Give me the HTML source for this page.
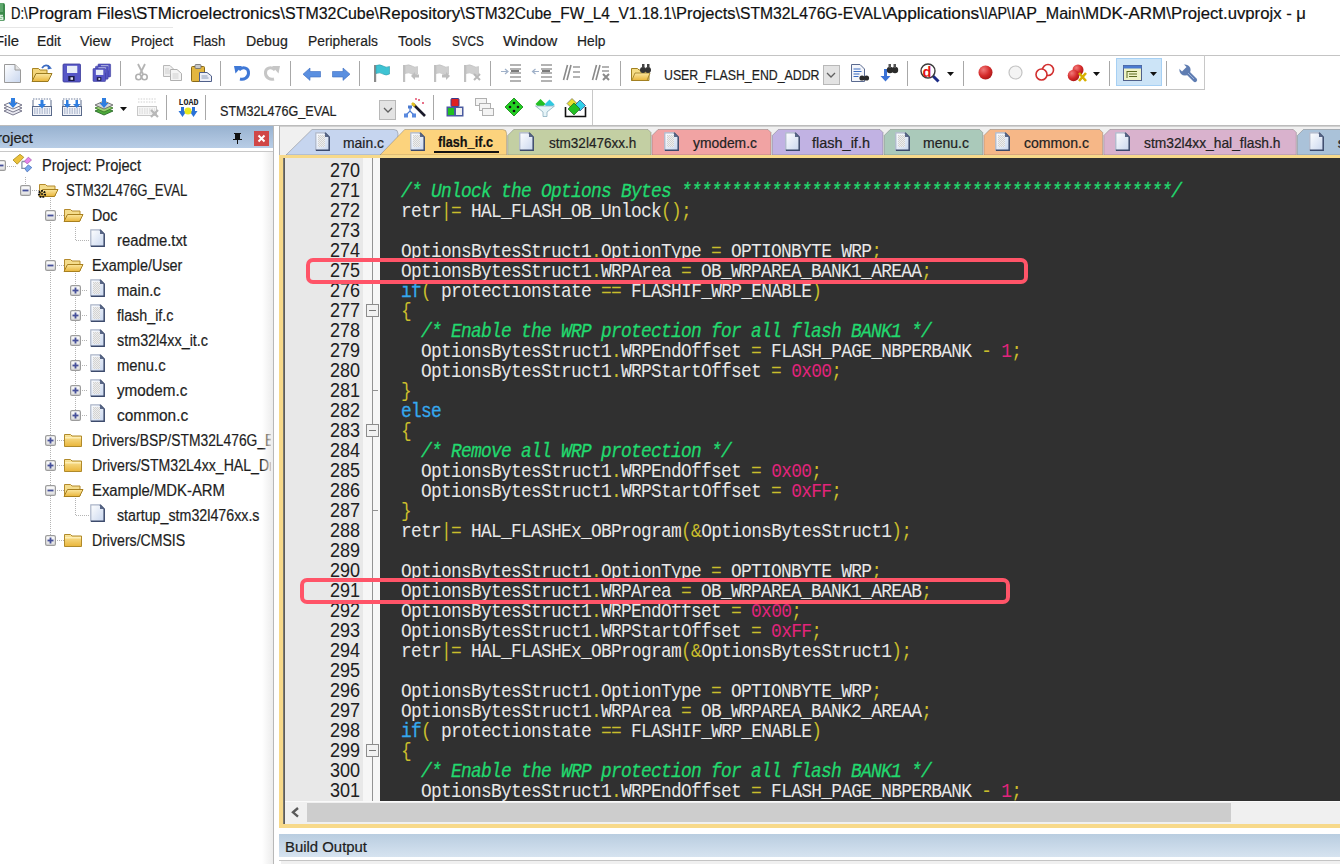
<!DOCTYPE html>
<html><head><meta charset="utf-8"><title>uVision</title><style>
*{margin:0;padding:0;box-sizing:border-box}
html,body{width:1340px;height:864px;overflow:hidden}
body{position:relative;background:#fff;font-family:"Liberation Sans",sans-serif;color:#1e1e1e}
.a{position:absolute}
.t{position:absolute;white-space:pre;line-height:1;-webkit-text-stroke:0.2px currentColor}
svg{position:absolute;overflow:visible}
/* code */
.code{position:absolute;left:380px;top:158px;width:960px;height:643px;background:#303030;overflow:hidden}
.ln{position:absolute;left:1px;width:1200px;height:20px;white-space:pre;font-family:"Liberation Mono",monospace;font-size:21px;line-height:20px;letter-spacing:-0.835px;color:#e8e8e8;transform:scaleX(0.85);transform-origin:0 0}
.p{color:#c9bd2c}
.n{color:#e2247c}
.k{color:#35a8ee;-webkit-text-stroke:0.3px currentColor}
.c{color:#22d96e;font-style:italic;-webkit-text-stroke:0.3px currentColor}
.gut{position:absolute;left:285px;top:158px;width:78px;height:643px;background:#e8e8e8;overflow:hidden}
.fm{position:absolute;left:363px;top:158px;width:17px;height:643px;background:#f6f6f6}
.num{position:absolute;left:15px;width:60px;text-align:right;font-size:20px;line-height:20px;height:20px;color:#202020;-webkit-text-stroke:0;transform:scaleX(0.9);transform-origin:100% 0}

</style></head><body>
<svg width="0" height="0" style="position:absolute;left:0;top:0"><defs><linearGradient id="pmg" x1="0" y1="0" x2="0" y2="1"><stop offset="0" stop-color="#ffffff"/><stop offset="1" stop-color="#dcdcdc"/></linearGradient><linearGradient id="pgg" x1="0" y1="0" x2="1" y2="1"><stop offset="0" stop-color="#ffffff"/><stop offset="1" stop-color="#c8d6ee"/></linearGradient><linearGradient id="fdg" x1="0" y1="0" x2="0" y2="1"><stop offset="0" stop-color="#fbe7a0"/><stop offset="1" stop-color="#e9b53a"/></linearGradient><pattern id="chk" width="2" height="2" patternUnits="userSpaceOnUse"><rect width="1" height="1" fill="#d2d2d2"/><rect x="1" y="1" width="1" height="1" fill="#d2d2d2"/><rect x="1" width="1" height="1" fill="#eeeeee"/><rect y="1" width="1" height="1" fill="#eeeeee"/></pattern></defs></svg><div class="a" style="left:25px;top:177px;width:1px;height:8px;background:repeating-linear-gradient(180deg,#b4b4b4 0 1px,transparent 1px 2px)"></div><div class="a" style="left:50px;top:198px;width:1px;height:337px;background:repeating-linear-gradient(180deg,#b4b4b4 0 1px,transparent 1px 2px)"></div><div class="a" style="left:75px;top:227px;width:1px;height:13px;background:repeating-linear-gradient(180deg,#b4b4b4 0 1px,transparent 1px 2px)"></div><div class="a" style="left:75px;top:271px;width:1px;height:139px;background:repeating-linear-gradient(180deg,#b4b4b4 0 1px,transparent 1px 2px)"></div><div class="a" style="left:75px;top:496px;width:1px;height:19px;background:repeating-linear-gradient(180deg,#b4b4b4 0 1px,transparent 1px 2px)"></div><div class="a" style="left:0;top:0;width:271px;height:864px;overflow:hidden"><svg style="left:-5.0px;top:159.5px" width="11" height="11" viewBox="0 0 11 11"><rect x="0.6" y="0.6" width="9.8" height="9.8" rx="1.5" fill="url(#pmg)" stroke="#9c9c9c" stroke-width="1.2"/><rect x="2.5" y="4.6" width="6" height="1.8" fill="#46509a"/></svg><div class="a" style="left:6.5px;top:166px;width:9.5px;height:1px;background:repeating-linear-gradient(90deg,#b4b4b4 0 1px,transparent 1px 2px)"></div><svg style="left:0px;top:150px" width="40" height="30" viewBox="0 0 40 30"><path d="M21.9 11.5 V18.4 H26 M21.9 11.5 H25.5" fill="none" stroke="#8892a4" stroke-width="1.3"/><path d="M13 10 L20 4.3 L23.8 7.3 L17.2 14.2Z" fill="#ecc23c" stroke="#a88a1c" stroke-width=".8"/><path d="M24.5 11.2 L28.3 7.2 L31.5 10 L27.2 13.9Z" fill="#e884ec" stroke="#a860b0" stroke-width=".8"/><path d="M24.8 18.7 L28.3 14.9 L31.8 17.6 L27.2 21.9Z" fill="#78a8ee" stroke="#4a70b8" stroke-width=".8"/></svg><div class="t" style="left:41.80px;top:158.02px;font-size:15.80px;color:#1e1e1e;transform:scaleX(0.9241);transform-origin:0 0;">Project: Project</div><svg style="left:20.0px;top:184.5px" width="11" height="11" viewBox="0 0 11 11"><rect x="0.6" y="0.6" width="9.8" height="9.8" rx="1.5" fill="url(#pmg)" stroke="#9c9c9c" stroke-width="1.2"/><rect x="2.5" y="4.6" width="6" height="1.8" fill="#46509a"/></svg><div class="a" style="left:31.5px;top:190px;width:7.0px;height:1px;background:repeating-linear-gradient(90deg,#b4b4b4 0 1px,transparent 1px 2px)"></div><svg style="left:38px;top:182px" width="21" height="16" viewBox="0 0 21 16"><path d="M1.5 2.5h6l1.5 1.5h8v10h-15.5z" fill="#f4dc8c" stroke="#b48a2c"/><path d="M1 14.5 L4.5 7.5 H20 L16.5 14.5 Z" fill="url(#fdg)" stroke="#a8801e"/></svg><svg style="left:37px;top:189px" width="10" height="10" viewBox="0 0 10 10"><circle cx="5" cy="5" r="3" fill="none" stroke="#111" stroke-width="2.2" stroke-dasharray="1.6 1"/><circle cx="5" cy="5" r="1" fill="#111"/></svg><div class="t" style="left:66.40px;top:183.02px;font-size:15.80px;color:#1e1e1e;transform:scaleX(0.8293);transform-origin:0 0;">STM32L476G_EVAL</div><svg style="left:45.0px;top:209.5px" width="11" height="11" viewBox="0 0 11 11"><rect x="0.6" y="0.6" width="9.8" height="9.8" rx="1.5" fill="url(#pmg)" stroke="#9c9c9c" stroke-width="1.2"/><rect x="2.5" y="4.6" width="6" height="1.8" fill="#46509a"/></svg><div class="a" style="left:56.5px;top:215px;width:7.0px;height:1px;background:repeating-linear-gradient(90deg,#b4b4b4 0 1px,transparent 1px 2px)"></div><svg style="left:63px;top:207px" width="21" height="16" viewBox="0 0 21 16"><path d="M1.5 2.5h6l1.5 1.5h8v10h-15.5z" fill="#f4dc8c" stroke="#b48a2c"/><path d="M1 14.5 L4.5 7.5 H20 L16.5 14.5 Z" fill="url(#fdg)" stroke="#a8801e"/></svg><div class="t" style="left:91.50px;top:208.02px;font-size:15.80px;color:#1e1e1e;transform:scaleX(0.9040);transform-origin:0 0;">Doc</div><div class="a" style="left:76px;top:240px;width:14px;height:1px;background:repeating-linear-gradient(90deg,#b4b4b4 0 1px,transparent 1px 2px)"></div><svg style="left:90.3px;top:229.4px" width="15" height="18" viewBox="0 0 15 18"><path d="M0.5 17.5 V0.5 H10 L14.5 5 V17.5 Z" fill="url(#pgg)" stroke="none"/><path d="M0.8 17 V0.8 H10" fill="none" stroke="#aab4c8" stroke-width="1.2"/><path d="M10 0.8 L14.2 5 V17.2 H0.8" fill="none" stroke="#3c4a6c" stroke-width="1.5"/><path d="M10 0.8 V5 H14.2 Z" fill="#5a6888"/></svg><div class="t" style="left:117.20px;top:233.02px;font-size:15.80px;color:#1e1e1e;transform:scaleX(0.9378);transform-origin:0 0;">readme.txt</div><svg style="left:45.0px;top:259.5px" width="11" height="11" viewBox="0 0 11 11"><rect x="0.6" y="0.6" width="9.8" height="9.8" rx="1.5" fill="url(#pmg)" stroke="#9c9c9c" stroke-width="1.2"/><rect x="2.5" y="4.6" width="6" height="1.8" fill="#46509a"/></svg><div class="a" style="left:56.5px;top:265px;width:7.0px;height:1px;background:repeating-linear-gradient(90deg,#b4b4b4 0 1px,transparent 1px 2px)"></div><svg style="left:63px;top:257px" width="21" height="16" viewBox="0 0 21 16"><path d="M1.5 2.5h6l1.5 1.5h8v10h-15.5z" fill="#f4dc8c" stroke="#b48a2c"/><path d="M1 14.5 L4.5 7.5 H20 L16.5 14.5 Z" fill="url(#fdg)" stroke="#a8801e"/></svg><div class="t" style="left:91.50px;top:258.02px;font-size:15.80px;color:#1e1e1e;transform:scaleX(0.9111);transform-origin:0 0;">Example/User</div><svg style="left:70.0px;top:284.5px" width="11" height="11" viewBox="0 0 11 11"><rect x="0.6" y="0.6" width="9.8" height="9.8" rx="1.5" fill="url(#pmg)" stroke="#9c9c9c" stroke-width="1.2"/><rect x="2.5" y="4.6" width="6" height="1.8" fill="#46509a"/><rect x="4.6" y="2.5" width="1.8" height="6" fill="#46509a"/></svg><div class="a" style="left:81.5px;top:290px;width:6.0px;height:1px;background:repeating-linear-gradient(90deg,#b4b4b4 0 1px,transparent 1px 2px)"></div><svg style="left:90.3px;top:279.4px" width="15" height="18" viewBox="0 0 15 18"><path d="M0.5 17.5 V0.5 H10 L14.5 5 V17.5 Z" fill="url(#pgg)" stroke="none"/><path d="M0.8 17 V0.8 H10" fill="none" stroke="#aab4c8" stroke-width="1.2"/><path d="M10 0.8 L14.2 5 V17.2 H0.8" fill="none" stroke="#3c4a6c" stroke-width="1.5"/><path d="M10 0.8 V5 H14.2 Z" fill="#5a6888"/><rect x="3" y="3" width="7" height="12" fill="url(#chk)"/></svg><div class="t" style="left:117.20px;top:283.02px;font-size:15.80px;color:#1e1e1e;transform:scaleX(0.9391);transform-origin:0 0;">main.c</div><svg style="left:70.0px;top:309.5px" width="11" height="11" viewBox="0 0 11 11"><rect x="0.6" y="0.6" width="9.8" height="9.8" rx="1.5" fill="url(#pmg)" stroke="#9c9c9c" stroke-width="1.2"/><rect x="2.5" y="4.6" width="6" height="1.8" fill="#46509a"/><rect x="4.6" y="2.5" width="1.8" height="6" fill="#46509a"/></svg><div class="a" style="left:81.5px;top:315px;width:6.0px;height:1px;background:repeating-linear-gradient(90deg,#b4b4b4 0 1px,transparent 1px 2px)"></div><svg style="left:90.3px;top:304.4px" width="15" height="18" viewBox="0 0 15 18"><path d="M0.5 17.5 V0.5 H10 L14.5 5 V17.5 Z" fill="url(#pgg)" stroke="none"/><path d="M0.8 17 V0.8 H10" fill="none" stroke="#aab4c8" stroke-width="1.2"/><path d="M10 0.8 L14.2 5 V17.2 H0.8" fill="none" stroke="#3c4a6c" stroke-width="1.5"/><path d="M10 0.8 V5 H14.2 Z" fill="#5a6888"/><rect x="3" y="3" width="7" height="12" fill="url(#chk)"/></svg><div class="t" style="left:117.20px;top:308.02px;font-size:15.80px;color:#1e1e1e;transform:scaleX(0.9046);transform-origin:0 0;">flash_if.c</div><svg style="left:70.0px;top:334.5px" width="11" height="11" viewBox="0 0 11 11"><rect x="0.6" y="0.6" width="9.8" height="9.8" rx="1.5" fill="url(#pmg)" stroke="#9c9c9c" stroke-width="1.2"/><rect x="2.5" y="4.6" width="6" height="1.8" fill="#46509a"/><rect x="4.6" y="2.5" width="1.8" height="6" fill="#46509a"/></svg><div class="a" style="left:81.5px;top:340px;width:6.0px;height:1px;background:repeating-linear-gradient(90deg,#b4b4b4 0 1px,transparent 1px 2px)"></div><svg style="left:90.3px;top:329.4px" width="15" height="18" viewBox="0 0 15 18"><path d="M0.5 17.5 V0.5 H10 L14.5 5 V17.5 Z" fill="url(#pgg)" stroke="none"/><path d="M0.8 17 V0.8 H10" fill="none" stroke="#aab4c8" stroke-width="1.2"/><path d="M10 0.8 L14.2 5 V17.2 H0.8" fill="none" stroke="#3c4a6c" stroke-width="1.5"/><path d="M10 0.8 V5 H14.2 Z" fill="#5a6888"/><rect x="3" y="3" width="7" height="12" fill="url(#chk)"/></svg><div class="t" style="left:117.20px;top:333.02px;font-size:15.80px;color:#1e1e1e;transform:scaleX(0.9091);transform-origin:0 0;">stm32l4xx_it.c</div><svg style="left:70.0px;top:359.5px" width="11" height="11" viewBox="0 0 11 11"><rect x="0.6" y="0.6" width="9.8" height="9.8" rx="1.5" fill="url(#pmg)" stroke="#9c9c9c" stroke-width="1.2"/><rect x="2.5" y="4.6" width="6" height="1.8" fill="#46509a"/><rect x="4.6" y="2.5" width="1.8" height="6" fill="#46509a"/></svg><div class="a" style="left:81.5px;top:365px;width:6.0px;height:1px;background:repeating-linear-gradient(90deg,#b4b4b4 0 1px,transparent 1px 2px)"></div><svg style="left:90.3px;top:354.4px" width="15" height="18" viewBox="0 0 15 18"><path d="M0.5 17.5 V0.5 H10 L14.5 5 V17.5 Z" fill="url(#pgg)" stroke="none"/><path d="M0.8 17 V0.8 H10" fill="none" stroke="#aab4c8" stroke-width="1.2"/><path d="M10 0.8 L14.2 5 V17.2 H0.8" fill="none" stroke="#3c4a6c" stroke-width="1.5"/><path d="M10 0.8 V5 H14.2 Z" fill="#5a6888"/><rect x="3" y="3" width="7" height="12" fill="url(#chk)"/></svg><div class="t" style="left:117.20px;top:358.02px;font-size:15.80px;color:#1e1e1e;transform:scaleX(0.9380);transform-origin:0 0;">menu.c</div><svg style="left:70.0px;top:384.5px" width="11" height="11" viewBox="0 0 11 11"><rect x="0.6" y="0.6" width="9.8" height="9.8" rx="1.5" fill="url(#pmg)" stroke="#9c9c9c" stroke-width="1.2"/><rect x="2.5" y="4.6" width="6" height="1.8" fill="#46509a"/><rect x="4.6" y="2.5" width="1.8" height="6" fill="#46509a"/></svg><div class="a" style="left:81.5px;top:390px;width:6.0px;height:1px;background:repeating-linear-gradient(90deg,#b4b4b4 0 1px,transparent 1px 2px)"></div><svg style="left:90.3px;top:379.4px" width="15" height="18" viewBox="0 0 15 18"><path d="M0.5 17.5 V0.5 H10 L14.5 5 V17.5 Z" fill="url(#pgg)" stroke="none"/><path d="M0.8 17 V0.8 H10" fill="none" stroke="#aab4c8" stroke-width="1.2"/><path d="M10 0.8 L14.2 5 V17.2 H0.8" fill="none" stroke="#3c4a6c" stroke-width="1.5"/><path d="M10 0.8 V5 H14.2 Z" fill="#5a6888"/><rect x="3" y="3" width="7" height="12" fill="url(#chk)"/></svg><div class="t" style="left:117.20px;top:383.02px;font-size:15.80px;color:#1e1e1e;transform:scaleX(0.9647);transform-origin:0 0;">ymodem.c</div><svg style="left:70.0px;top:409.5px" width="11" height="11" viewBox="0 0 11 11"><rect x="0.6" y="0.6" width="9.8" height="9.8" rx="1.5" fill="url(#pmg)" stroke="#9c9c9c" stroke-width="1.2"/><rect x="2.5" y="4.6" width="6" height="1.8" fill="#46509a"/><rect x="4.6" y="2.5" width="1.8" height="6" fill="#46509a"/></svg><div class="a" style="left:81.5px;top:415px;width:6.0px;height:1px;background:repeating-linear-gradient(90deg,#b4b4b4 0 1px,transparent 1px 2px)"></div><svg style="left:90.3px;top:404.4px" width="15" height="18" viewBox="0 0 15 18"><path d="M0.5 17.5 V0.5 H10 L14.5 5 V17.5 Z" fill="url(#pgg)" stroke="none"/><path d="M0.8 17 V0.8 H10" fill="none" stroke="#aab4c8" stroke-width="1.2"/><path d="M10 0.8 L14.2 5 V17.2 H0.8" fill="none" stroke="#3c4a6c" stroke-width="1.5"/><path d="M10 0.8 V5 H14.2 Z" fill="#5a6888"/><rect x="3" y="3" width="7" height="12" fill="url(#chk)"/></svg><div class="t" style="left:117.20px;top:408.02px;font-size:15.80px;color:#1e1e1e;transform:scaleX(0.9770);transform-origin:0 0;">common.c</div><svg style="left:45.0px;top:434.5px" width="11" height="11" viewBox="0 0 11 11"><rect x="0.6" y="0.6" width="9.8" height="9.8" rx="1.5" fill="url(#pmg)" stroke="#9c9c9c" stroke-width="1.2"/><rect x="2.5" y="4.6" width="6" height="1.8" fill="#46509a"/><rect x="4.6" y="2.5" width="1.8" height="6" fill="#46509a"/></svg><div class="a" style="left:56.5px;top:440px;width:7.0px;height:1px;background:repeating-linear-gradient(90deg,#b4b4b4 0 1px,transparent 1px 2px)"></div><svg style="left:63px;top:432px" width="21" height="16" viewBox="0 0 21 16"><path d="M1.5 2.5h6l1.5 1.5h9.5v10.5h-17z" fill="url(#fdg)" stroke="#b08a2a"/><rect x="2" y="5" width="16" height="1.5" fill="#fff3c0" opacity=".8"/></svg><div class="t" style="left:91.50px;top:433.02px;font-size:15.80px;color:#1e1e1e;transform:scaleX(0.8762);transform-origin:0 0;">Drivers/BSP/STM32L476G_EVAL</div><svg style="left:45.0px;top:459.5px" width="11" height="11" viewBox="0 0 11 11"><rect x="0.6" y="0.6" width="9.8" height="9.8" rx="1.5" fill="url(#pmg)" stroke="#9c9c9c" stroke-width="1.2"/><rect x="2.5" y="4.6" width="6" height="1.8" fill="#46509a"/><rect x="4.6" y="2.5" width="1.8" height="6" fill="#46509a"/></svg><div class="a" style="left:56.5px;top:465px;width:7.0px;height:1px;background:repeating-linear-gradient(90deg,#b4b4b4 0 1px,transparent 1px 2px)"></div><svg style="left:63px;top:457px" width="21" height="16" viewBox="0 0 21 16"><path d="M1.5 2.5h6l1.5 1.5h9.5v10.5h-17z" fill="url(#fdg)" stroke="#b08a2a"/><rect x="2" y="5" width="16" height="1.5" fill="#fff3c0" opacity=".8"/></svg><div class="t" style="left:91.50px;top:458.02px;font-size:15.80px;color:#1e1e1e;transform:scaleX(0.8926);transform-origin:0 0;">Drivers/STM32L4xx_HAL_Driver</div><svg style="left:45.0px;top:484.5px" width="11" height="11" viewBox="0 0 11 11"><rect x="0.6" y="0.6" width="9.8" height="9.8" rx="1.5" fill="url(#pmg)" stroke="#9c9c9c" stroke-width="1.2"/><rect x="2.5" y="4.6" width="6" height="1.8" fill="#46509a"/></svg><div class="a" style="left:56.5px;top:490px;width:7.0px;height:1px;background:repeating-linear-gradient(90deg,#b4b4b4 0 1px,transparent 1px 2px)"></div><svg style="left:63px;top:482px" width="21" height="16" viewBox="0 0 21 16"><path d="M1.5 2.5h6l1.5 1.5h8v10h-15.5z" fill="#f4dc8c" stroke="#b48a2c"/><path d="M1 14.5 L4.5 7.5 H20 L16.5 14.5 Z" fill="url(#fdg)" stroke="#a8801e"/></svg><div class="t" style="left:91.50px;top:483.02px;font-size:15.80px;color:#1e1e1e;transform:scaleX(0.9410);transform-origin:0 0;">Example/MDK-ARM</div><div class="a" style="left:76px;top:515px;width:14px;height:1px;background:repeating-linear-gradient(90deg,#b4b4b4 0 1px,transparent 1px 2px)"></div><svg style="left:90.3px;top:504.4px" width="15" height="18" viewBox="0 0 15 18"><path d="M0.5 17.5 V0.5 H10 L14.5 5 V17.5 Z" fill="url(#pgg)" stroke="none"/><path d="M0.8 17 V0.8 H10" fill="none" stroke="#aab4c8" stroke-width="1.2"/><path d="M10 0.8 L14.2 5 V17.2 H0.8" fill="none" stroke="#3c4a6c" stroke-width="1.5"/><path d="M10 0.8 V5 H14.2 Z" fill="#5a6888"/></svg><div class="t" style="left:117.20px;top:508.02px;font-size:15.80px;color:#1e1e1e;transform:scaleX(0.9015);transform-origin:0 0;">startup_stm32l476xx.s</div><svg style="left:45.0px;top:534.5px" width="11" height="11" viewBox="0 0 11 11"><rect x="0.6" y="0.6" width="9.8" height="9.8" rx="1.5" fill="url(#pmg)" stroke="#9c9c9c" stroke-width="1.2"/><rect x="2.5" y="4.6" width="6" height="1.8" fill="#46509a"/><rect x="4.6" y="2.5" width="1.8" height="6" fill="#46509a"/></svg><div class="a" style="left:56.5px;top:540px;width:7.0px;height:1px;background:repeating-linear-gradient(90deg,#b4b4b4 0 1px,transparent 1px 2px)"></div><svg style="left:63px;top:532px" width="21" height="16" viewBox="0 0 21 16"><path d="M1.5 2.5h6l1.5 1.5h9.5v10.5h-17z" fill="url(#fdg)" stroke="#b08a2a"/><rect x="2" y="5" width="16" height="1.5" fill="#fff3c0" opacity=".8"/></svg><div class="t" style="left:91.50px;top:533.02px;font-size:15.80px;color:#1e1e1e;transform:scaleX(0.8922);transform-origin:0 0;">Drivers/CMSIS</div></div><div class="gut"><div class="num t" style="top:2px">270</div><div class="num t" style="top:22px">271</div><div class="num t" style="top:42px">272</div><div class="num t" style="top:62px">273</div><div class="num t" style="top:82px">274</div><div class="num t" style="top:102px">275</div><div class="num t" style="top:122px">276</div><div class="num t" style="top:142px">277</div><div class="num t" style="top:162px">278</div><div class="num t" style="top:182px">279</div><div class="num t" style="top:202px">280</div><div class="num t" style="top:222px">281</div><div class="num t" style="top:242px">282</div><div class="num t" style="top:262px">283</div><div class="num t" style="top:282px">284</div><div class="num t" style="top:302px">285</div><div class="num t" style="top:322px">286</div><div class="num t" style="top:342px">287</div><div class="num t" style="top:362px">288</div><div class="num t" style="top:382px">289</div><div class="num t" style="top:402px">290</div><div class="num t" style="top:422px">291</div><div class="num t" style="top:442px">292</div><div class="num t" style="top:462px">293</div><div class="num t" style="top:482px">294</div><div class="num t" style="top:502px">295</div><div class="num t" style="top:522px">296</div><div class="num t" style="top:542px">297</div><div class="num t" style="top:562px">298</div><div class="num t" style="top:582px">299</div><div class="num t" style="top:602px">300</div><div class="num t" style="top:622px">301</div></div><div class="fm"></div><div class="code"><div class="ln" style="top:4px"></div><div class="ln" style="top:24px">  <span class="c">/* Unlock the Options Bytes *************************************************/</span></div><div class="ln" style="top:44px">  retr<span class="p">|</span><span class="p">=</span> HAL_FLASH_OB_Unlock<span class="p">(</span><span class="p">)</span><span class="p">;</span></div><div class="ln" style="top:64px"></div><div class="ln" style="top:84px">  OptionsBytesStruct1<span class="p">.</span>OptionType <span class="p">=</span> OPTIONBYTE_WRP<span class="p">;</span></div><div class="ln" style="top:104px">  OptionsBytesStruct1<span class="p">.</span>WRPArea <span class="p">=</span> OB_WRPAREA_BANK1_AREAA<span class="p">;</span></div><div class="ln" style="top:124px">  <span class="k">if</span><span class="p">(</span> protectionstate <span class="p">=</span><span class="p">=</span> FLASHIF_WRP_ENABLE<span class="p">)</span></div><div class="ln" style="top:144px">  <span class="p">{</span></div><div class="ln" style="top:164px">    <span class="c">/* Enable the WRP protection for all flash BANK1 */</span></div><div class="ln" style="top:184px">    OptionsBytesStruct1<span class="p">.</span>WRPEndOffset <span class="p">=</span> FLASH_PAGE_NBPERBANK <span class="p">-</span> <span class="n">1</span><span class="p">;</span></div><div class="ln" style="top:204px">    OptionsBytesStruct1<span class="p">.</span>WRPStartOffset <span class="p">=</span> <span class="n">0x00</span><span class="p">;</span></div><div class="ln" style="top:224px">  <span class="p">}</span></div><div class="ln" style="top:244px">  <span class="k">else</span></div><div class="ln" style="top:264px">  <span class="p">{</span></div><div class="ln" style="top:284px">    <span class="c">/* Remove all WRP protection */</span></div><div class="ln" style="top:304px">    OptionsBytesStruct1<span class="p">.</span>WRPEndOffset <span class="p">=</span> <span class="n">0x00</span><span class="p">;</span></div><div class="ln" style="top:324px">    OptionsBytesStruct1<span class="p">.</span>WRPStartOffset <span class="p">=</span> <span class="n">0xFF</span><span class="p">;</span></div><div class="ln" style="top:344px">  <span class="p">}</span></div><div class="ln" style="top:364px">  retr<span class="p">|</span><span class="p">=</span> HAL_FLASHEx_OBProgram<span class="p">(</span><span class="p">&amp;</span>OptionsBytesStruct1<span class="p">)</span><span class="p">;</span></div><div class="ln" style="top:384px"></div><div class="ln" style="top:404px">  OptionsBytesStruct1<span class="p">.</span>OptionType <span class="p">=</span> OPTIONBYTE_WRP<span class="p">;</span></div><div class="ln" style="top:424px">  OptionsBytesStruct1<span class="p">.</span>WRPArea <span class="p">=</span> OB_WRPAREA_BANK1_AREAB<span class="p">;</span></div><div class="ln" style="top:444px">  OptionsBytesStruct1<span class="p">.</span>WRPEndOffset <span class="p">=</span> <span class="n">0x00</span><span class="p">;</span></div><div class="ln" style="top:464px">  OptionsBytesStruct1<span class="p">.</span>WRPStartOffset <span class="p">=</span> <span class="n">0xFF</span><span class="p">;</span></div><div class="ln" style="top:484px">  retr<span class="p">|</span><span class="p">=</span> HAL_FLASHEx_OBProgram<span class="p">(</span><span class="p">&amp;</span>OptionsBytesStruct1<span class="p">)</span><span class="p">;</span></div><div class="ln" style="top:504px"></div><div class="ln" style="top:524px">  OptionsBytesStruct1<span class="p">.</span>OptionType <span class="p">=</span> OPTIONBYTE_WRP<span class="p">;</span></div><div class="ln" style="top:544px">  OptionsBytesStruct1<span class="p">.</span>WRPArea <span class="p">=</span> OB_WRPAREA_BANK2_AREAA<span class="p">;</span></div><div class="ln" style="top:564px">  <span class="k">if</span><span class="p">(</span> protectionstate <span class="p">=</span><span class="p">=</span> FLASHIF_WRP_ENABLE<span class="p">)</span></div><div class="ln" style="top:584px">  <span class="p">{</span></div><div class="ln" style="top:604px">    <span class="c">/* Enable the WRP protection for all flash BANK1 */</span></div><div class="ln" style="top:624px">    OptionsBytesStruct1<span class="p">.</span>WRPEndOffset <span class="p">=</span> FLASH_PAGE_NBPERBANK <span class="p">-</span> <span class="n">1</span><span class="p">;</span></div></div><svg style="left:0px;top:2.7px" width="5" height="18" viewBox="0 0 5 18"><rect x="-9" y="0" width="14" height="18" rx="2" fill="#3c8a4c"/><rect x="-9" y="0" width="12" height="9" fill="#7cc08a" opacity=".55"/><path d="M3 12.5 H0 V14.5 H2.6 V16.5 H-1" stroke="#d8f0dc" stroke-width="1.6" fill="none"/></svg><div class="t" style="left:10.80px;top:5.65px;font-size:16.00px;color:#111;transform:scaleX(0.8168);transform-origin:0 0;">D:\</div><div class="t" style="left:27.50px;top:5.65px;font-size:16.00px;color:#111;transform:scaleX(1.0430);transform-origin:0 0;">Program Files\</div><div class="t" style="left:136.00px;top:5.65px;font-size:16.00px;color:#111;transform:scaleX(1.0607);transform-origin:0 0;">STMicroelectronics\</div><div class="t" style="left:285.00px;top:5.65px;font-size:16.00px;color:#111;transform:scaleX(0.9972);transform-origin:0 0;">STM32Cube\</div><div class="t" style="left:379.00px;top:5.65px;font-size:16.00px;color:#111;transform:scaleX(1.0628);transform-origin:0 0;">Repository\</div><div class="t" style="left:465.00px;top:5.65px;font-size:16.00px;color:#111;transform:scaleX(0.9644);transform-origin:0 0;">STM32Cube_FW_L4_V1.18.1\</div><div class="t" style="left:676.00px;top:5.65px;font-size:16.00px;color:#111;transform:scaleX(1.0282);transform-origin:0 0;">Projects\</div><div class="t" style="left:740.00px;top:5.65px;font-size:16.00px;color:#111;transform:scaleX(0.9791);transform-origin:0 0;">STM32L476G-EVAL\</div><div class="t" style="left:886.00px;top:5.65px;font-size:16.00px;color:#111;transform:scaleX(1.0803);transform-origin:0 0;">Applications\</div><div class="t" style="left:984.00px;top:5.65px;font-size:16.00px;color:#111;transform:scaleX(0.8930);transform-origin:0 0;">IAP\</div><div class="t" style="left:1011.00px;top:5.65px;font-size:16.00px;color:#111;transform:scaleX(1.0025);transform-origin:0 0;">IAP_Main\</div><div class="t" style="left:1085.00px;top:5.65px;font-size:16.00px;color:#111;transform:scaleX(1.0633);transform-origin:0 0;">MDK-ARM\</div><div class="t" style="left:1171.00px;top:5.65px;font-size:16.00px;color:#111;transform:scaleX(1.0444);transform-origin:0 0;">Project.uvprojx - μ</div><div class="a" style="left:0px;top:27px;width:173px;height:1px;background:#e6e6e6"></div><div class="t" style="left:-5.50px;top:32.86px;font-size:15.40px;color:#1e1e1e;transform:scaleX(0.9672);transform-origin:0 0;">File</div><div class="t" style="left:37.00px;top:32.86px;font-size:15.40px;color:#1e1e1e;transform:scaleX(0.9006);transform-origin:0 0;">Edit</div><div class="t" style="left:80.00px;top:32.86px;font-size:15.40px;color:#1e1e1e;transform:scaleX(0.9365);transform-origin:0 0;">View</div><div class="t" style="left:130.90px;top:32.86px;font-size:15.40px;color:#1e1e1e;transform:scaleX(0.8805);transform-origin:0 0;">Project</div><div class="t" style="left:193.40px;top:32.86px;font-size:15.40px;color:#1e1e1e;transform:scaleX(0.8577);transform-origin:0 0;">Flash</div><div class="t" style="left:246.00px;top:32.86px;font-size:15.40px;color:#1e1e1e;transform:scaleX(0.9211);transform-origin:0 0;">Debug</div><div class="t" style="left:308.40px;top:32.86px;font-size:15.40px;color:#1e1e1e;transform:scaleX(0.8974);transform-origin:0 0;">Peripherals</div><div class="t" style="left:397.90px;top:32.86px;font-size:15.40px;color:#1e1e1e;transform:scaleX(0.9179);transform-origin:0 0;">Tools</div><div class="t" style="left:452.10px;top:32.86px;font-size:15.40px;color:#1e1e1e;transform:scaleX(0.7583);transform-origin:0 0;">SVCS</div><div class="t" style="left:503.00px;top:32.86px;font-size:15.40px;color:#1e1e1e;transform:scaleX(0.9932);transform-origin:0 0;">Window</div><div class="t" style="left:577.00px;top:32.86px;font-size:15.40px;color:#1e1e1e;transform:scaleX(0.8998);transform-origin:0 0;">Help</div><div class="a" style="left:0px;top:55px;width:1340px;height:1px;background:#c4c4c4"></div><div class="a" style="left:1204px;top:55px;width:1px;height:35px;background:#c8c8c8"></div><div class="a" style="left:0px;top:89px;width:1205px;height:1px;background:#c4c4c4"></div><div class="a" style="left:592px;top:90px;width:1px;height:34.5px;background:#c8c8c8"></div><div class="a" style="left:0px;top:124.5px;width:1340px;height:1px;background:#bcbcbc"></div><svg style="left:4px;top:63.5px" width="17" height="19" viewBox="0 0 17 19"><path d="M0.5 0.5H11L16.5 6V18.5H0.5Z" fill="url(#pgg)" stroke="#9a9a9a"/><path d="M11 0.5V6H16.5" fill="#e4e4e4" stroke="#9a9a9a"/></svg><svg style="left:31px;top:64px" width="22" height="18" viewBox="0 0 22 18"><path d="M1.5 4.5h6l1.5 1.5h7v11h-14.5z" fill="#f3d57a" stroke="#a88424"/><path d="M1 17.5 L5 9.5 H21 L17 17.5 Z" fill="url(#fdg)" stroke="#9a7a20"/><path d="M11 4 Q15 -1 19 3.5" fill="none" stroke="#3a6ac0" stroke-width="1.8"/><path d="M17 1 L21 4.5 L16.5 5.5Z" fill="#3a6ac0"/></svg><svg style="left:62.7px;top:63.8px" width="18" height="18" viewBox="0 0 18 18"><g transform="translate(0 0) scale(1)"><rect x="0" y="0" width="17.5" height="18" rx="1" fill="#5656c6" stroke="#3a3a9a" stroke-width=".8"/><rect x="4" y="1.8" width="10.3" height="7.2" fill="#e9eef8"/><rect x="5.3" y="12" width="6.3" height="5" fill="#1c1c4a"/><rect x="7.5" y="13.3" width="2.5" height="2.5" fill="#e0e0f0"/></g></svg><svg style="left:92.8px;top:63.8px" width="18" height="19" viewBox="0 0 18 19"><g transform="translate(5 0) scale(0.72)"><rect x="0" y="0" width="17.5" height="18" rx="1" fill="#5656c6" stroke="#3a3a9a" stroke-width=".8"/><rect x="4" y="1.8" width="10.3" height="7.2" fill="#e9eef8"/><rect x="5.3" y="12" width="6.3" height="5" fill="#1c1c4a"/><rect x="7.5" y="13.3" width="2.5" height="2.5" fill="#e0e0f0"/></g><g transform="translate(2.5 2.2) scale(0.72)"><rect x="0" y="0" width="17.5" height="18" rx="1" fill="#5656c6" stroke="#3a3a9a" stroke-width=".8"/><rect x="4" y="1.8" width="10.3" height="7.2" fill="#e9eef8"/><rect x="5.3" y="12" width="6.3" height="5" fill="#1c1c4a"/><rect x="7.5" y="13.3" width="2.5" height="2.5" fill="#e0e0f0"/></g><g transform="translate(0 4.5) scale(0.72)"><rect x="0" y="0" width="17.5" height="18" rx="1" fill="#5656c6" stroke="#3a3a9a" stroke-width=".8"/><rect x="4" y="1.8" width="10.3" height="7.2" fill="#e9eef8"/><rect x="5.3" y="12" width="6.3" height="5" fill="#1c1c4a"/><rect x="7.5" y="13.3" width="2.5" height="2.5" fill="#e0e0f0"/></g></svg><div class="a" style="left:119.5px;top:61px;width:1px;height:25px;background:#a8a8a8"></div><svg style="left:134.6px;top:64px" width="13" height="17" viewBox="0 0 13 17"><path d="M3 0 L8 10 M10 0 L5 10" stroke="#b4b4b4" stroke-width="1.8" fill="none"/><circle cx="3.5" cy="13" r="2.7" fill="none" stroke="#b0b0b0" stroke-width="1.6"/><circle cx="9.5" cy="13" r="2.7" fill="none" stroke="#b0b0b0" stroke-width="1.6"/></svg><svg style="left:162.6px;top:65px" width="19" height="16" viewBox="0 0 19 16"><path d="M0.5 0.5H7L10.5 4V11.5H0.5Z" fill="#f0f0f0" stroke="#b8b8b8"/><path d="M7.5 4.5H14L18.5 8.5V15.5H7.5Z" fill="#f4f4f4" stroke="#b0b0b0"/><path d="M9.5 9h6M9.5 11h6M9.5 13h6M2 4h4M2 6h6M2 8h6" stroke="#c8c8c8" stroke-width=".8"/></svg><svg style="left:191.3px;top:64px" width="21" height="18" viewBox="0 0 21 18"><rect x="0.5" y="2.5" width="13" height="15" rx="1" fill="#e2b640" stroke="#8a6a1a"/><rect x="4" y="0.5" width="6" height="4" rx="1" fill="#c9c9c9" stroke="#6a6a6a" stroke-width=".8"/><path d="M8.5 8.5H16L20.5 12V17.5H8.5Z" fill="#eef0f8" stroke="#50608a"/><path d="M10.5 12h6M10.5 14h7" stroke="#8090b0" stroke-width=".9"/></svg><div class="a" style="left:219.5px;top:61px;width:1px;height:25px;background:#a8a8a8"></div><svg style="left:233.8px;top:64.2px" width="16" height="17" viewBox="0 0 16 17"><path d="M5 6 C9 2 15 4 14.5 9.5 C14 14 10 16 6 15" fill="none" stroke="#3f78d6" stroke-width="3"/><path d="M0 2 L8 2 L1.5 9.5Z" fill="#3f78d6"/></svg><svg style="left:264.2px;top:64.2px" width="16" height="17" viewBox="0 0 16 17"><path d="M11 6 C7 2 1 4 1.5 9.5 C2 14 6 16 10 15" fill="none" stroke="#c6c6c6" stroke-width="3"/><path d="M16 2 L8 2 L14.5 9.5Z" fill="#c6c6c6"/></svg><div class="a" style="left:289.6px;top:61px;width:1px;height:25px;background:#a8a8a8"></div><svg style="left:302.8px;top:67.5px" width="18" height="13" viewBox="0 0 18 13"><path d="M0 6.2 L7 0 V3.5 H17.5 V9 H7 V12.4Z" fill="#5a8fe0" stroke="#3a6cc0" stroke-width=".6"/></svg><svg style="left:332.3px;top:67.5px" width="18" height="13" viewBox="0 0 18 13"><path d="M18 6.2 L11 0 V3.5 H0.5 V9 H11 V12.4Z" fill="#5a8fe0" stroke="#3a6cc0" stroke-width=".6"/></svg><div class="a" style="left:359.4px;top:61px;width:1px;height:25px;background:#a8a8a8"></div><svg style="left:372.6px;top:64px" width="17" height="18" viewBox="0 0 17 18"><rect x="1" y="1" width="2.2" height="17" fill="#8a8a8a"/><path d="M3 1.5 Q7 0 10 2 Q13 4 16.5 2.5 V10 Q13 12 10 10 Q7 8 3 9.5Z" fill="#3ec3d3" stroke="#2a9aaa" stroke-width=".6"/></svg><svg style="left:402px;top:64px" width="19" height="18" viewBox="0 0 19 18"><rect x="1" y="1" width="2.2" height="17" fill="#c0c0c0"/><path d="M3 1.5 Q7 0 10 2 Q13 4 15.5 2.5 V10 Q13 12 10 10 Q7 8 3 9.5Z" fill="#cfcfcf" stroke="#bcbcbc" stroke-width=".6"/><path d="M9 12 L13 8 V10.5 H17 V13.5 H13 V16Z" fill="#bdbdbd"/></svg><svg style="left:433px;top:64px" width="19" height="18" viewBox="0 0 19 18"><rect x="1" y="1" width="2.2" height="17" fill="#c0c0c0"/><path d="M3 1.5 Q7 0 10 2 Q13 4 15.5 2.5 V10 Q13 12 10 10 Q7 8 3 9.5Z" fill="#cfcfcf" stroke="#bcbcbc" stroke-width=".6"/><path d="M17 12 L13 8 V10.5 H9 V13.5 H13 V16Z" fill="#bdbdbd"/></svg><svg style="left:462.7px;top:64px" width="19" height="18" viewBox="0 0 19 18"><rect x="1" y="1" width="2.2" height="17" fill="#c0c0c0"/><path d="M3 1.5 Q7 0 10 2 Q13 4 15.5 2.5 V10 Q13 12 10 10 Q7 8 3 9.5Z" fill="#cfcfcf" stroke="#bcbcbc" stroke-width=".6"/><path d="M11 10 L17 16 M17 10 L11 16" stroke="#b8b8b8" stroke-width="2"/></svg><div class="a" style="left:489.8px;top:61px;width:1px;height:25px;background:#a8a8a8"></div><svg style="left:501px;top:63.4px" width="21" height="19" viewBox="0 0 21 19"><path d="M9 2h11M9 6h11M9 10h11M9 14h11M9 18h11" stroke="#9a9a9a" stroke-width="1.6"/><path d="M10 8h8" stroke="#7a7a7a" stroke-width="2"/><path d="M0 8.5h6M4 6l3 2.5-3 2.5" stroke="#9fb0c8" stroke-width="1.2" fill="none"/></svg><svg style="left:531.7px;top:63.4px" width="21" height="19" viewBox="0 0 21 19"><path d="M9 2h11M9 6h11M9 10h11M9 14h11M9 18h11" stroke="#9a9a9a" stroke-width="1.6"/><path d="M10 8h8" stroke="#7a7a7a" stroke-width="2"/><path d="M1 8.5h6M3.5 6l-3 2.5 3 2.5" stroke="#9fb0c8" stroke-width="1.2" fill="none"/></svg><svg style="left:562.9px;top:63.4px" width="18" height="19" viewBox="0 0 18 19"><path d="M4 17 L8 2 M0.5 17 L4.5 2" stroke="#8a8a8a" stroke-width="1.6"/><path d="M10 4h7M10 9h7M10 14h7" stroke="#9a9a9a" stroke-width="1.5"/></svg><svg style="left:592.4px;top:63.4px" width="19" height="19" viewBox="0 0 19 19"><path d="M4 17 L8 2 M0.5 17 L4.5 2" stroke="#8a8a8a" stroke-width="1.6"/><path d="M10 4h7M10 8h7" stroke="#9a9a9a" stroke-width="1.5"/><path d="M11 11 L17 17 M17 11 L11 17" stroke="#8a8a8a" stroke-width="2"/></svg><div class="a" style="left:619.5px;top:61px;width:1px;height:25px;background:#a8a8a8"></div><svg style="left:631px;top:63.8px" width="21" height="17" viewBox="0 0 21 17"><path d="M0.5 4.5h6l1.5 1.5h10v10.5h-17.5z" fill="#f5dc84" stroke="#a08020"/><path d="M0.8 16.5 L4 9 H19 L16 16.5Z" fill="url(#fdg)" stroke="#9a7a20" stroke-width=".8"/><circle cx="12" cy="6" r="3" fill="#333"/><circle cx="17" cy="6" r="3" fill="#333"/><rect x="11" y="0" width="2.5" height="4" fill="#444"/><rect x="16" y="0" width="2.5" height="4" fill="#444"/></svg><div class="t" style="left:663.70px;top:67.65px;font-size:14.00px;color:#1e1e1e;transform:scaleX(0.8805);transform-origin:0 0;">USER_FLASH_END_ADDR</div><div class="a" style="left:822.6px;top:64.5px;width:17.2px;height:20.5px;background:#e3e3e3;border:1px solid #b8b8b8"></div><svg style="left:826px;top:72px" width="10" height="6" viewBox="0 0 10 6"><path d="M1 1 L5 5 L9 1" stroke="#606060" stroke-width="1.3" fill="none"/></svg><svg style="left:850.6px;top:63.5px" width="18" height="18" viewBox="0 0 18 18"><path d="M0.5 0.5H9L13.5 5V17.5H0.5Z" fill="#f4f6fb" stroke="#5a6a90"/><path d="M2.5 5h7M2.5 7.5h8M2.5 10h6M2.5 12.5h5" stroke="#3a6ac0" stroke-width="1.2"/><circle cx="11" cy="14" r="2.6" fill="#2a2a2a"/><circle cx="15.5" cy="14" r="2.6" fill="#2a2a2a"/></svg><svg style="left:878.6px;top:63.5px" width="19" height="18" viewBox="0 0 19 18"><path d="M5 5 V12 H1.5 L6.5 17.5 L11.5 12 H8 V5Z" fill="#3a72d6"/><circle cx="11" cy="6" r="3.2" fill="#2a2a2a"/><circle cx="16" cy="6" r="3.2" fill="#2a2a2a"/><rect x="9.5" y="0" width="2.5" height="4" fill="#555"/><rect x="14.5" y="0" width="2.5" height="4" fill="#555"/></svg><div class="a" style="left:907px;top:61px;width:1px;height:25px;background:#a8a8a8"></div><svg style="left:919.7px;top:63px" width="20" height="19" viewBox="0 0 20 19"><path d="M12.5 12.5 L18.5 18.5" stroke="#1c2c86" stroke-width="3"/><circle cx="8" cy="8" r="7" fill="#fff" stroke="#3a3a3a" stroke-width="1.4"/><text x="2.6" y="13.6" font-family="Liberation Sans" font-weight="bold" font-size="14.5" fill="#e01414">d</text></svg><svg style="left:947.4px;top:72px" width="8" height="4" viewBox="0 0 8 4"><path d="M0 0h7l-3.5 4z" fill="#111"/></svg><div class="a" style="left:962.9px;top:61px;width:1px;height:25px;background:#a8a8a8"></div><svg style="left:977.5px;top:65.3px" width="15" height="15" viewBox="0 0 15 15"><defs><radialGradient id="rg1" cx=".35" cy=".3" r=".75"><stop offset="0" stop-color="#f27a7a"/><stop offset=".6" stop-color="#d42a2a"/><stop offset="1" stop-color="#a81818"/></radialGradient></defs><circle cx="7.5" cy="7.5" r="7" fill="url(#rg1)"/></svg><svg style="left:1007.6px;top:65.3px" width="15" height="15" viewBox="0 0 15 15"><circle cx="7.5" cy="7.5" r="6.5" fill="#f4f4f4" stroke="#c4c4c4" stroke-width="1.2"/></svg><svg style="left:1035.3px;top:64px" width="20" height="17" viewBox="0 0 20 17"><circle cx="13" cy="6" r="5.5" fill="#fff" stroke="#d23030" stroke-width="1.6"/><circle cx="6.5" cy="10.5" r="5.5" fill="#fff" stroke="#d23030" stroke-width="1.6"/></svg><svg style="left:1066.5px;top:63.5px" width="21" height="18" viewBox="0 0 21 18"><circle cx="11" cy="6" r="5.5" fill="url(#rg1)"/><circle cx="6.5" cy="11.5" r="5.8" fill="url(#rg1)"/><path d="M12 9 L19 17 M19 9 L12 17" stroke="#d8b000" stroke-width="2.6"/></svg><svg style="left:1093px;top:72px" width="8" height="4" viewBox="0 0 8 4"><path d="M0 0h7l-3.5 4z" fill="#111"/></svg><div class="a" style="left:1109.3px;top:61px;width:1px;height:25px;background:#a8a8a8"></div><div class="a" style="left:1116.3px;top:58.3px;width:46.2px;height:27.7px;background:#cce4f7;border:1px solid #a6d0f4"></div><svg style="left:1123px;top:64.8px" width="19" height="16" viewBox="0 0 19 16"><rect x="0.5" y="0.5" width="18" height="15" fill="#eef3c8" stroke="#50608a"/><rect x="0.5" y="0.5" width="18" height="3" fill="#4a7ad0"/><path d="M4 6v7M4 6.5h10M6 9h8M6 11.5h8" stroke="#5a6a20" stroke-width="1"/></svg><svg style="left:1150px;top:72px" width="8" height="4" viewBox="0 0 8 4"><path d="M0 0h7l-3.5 4z" fill="#111"/></svg><div class="a" style="left:1166px;top:61px;width:1px;height:25px;background:#a8a8a8"></div><svg style="left:1178.7px;top:63.5px" width="19" height="18" viewBox="0 0 19 18"><path d="M7.5 7.5 L16 16" stroke="#5f7db2" stroke-width="4.2" stroke-linecap="round"/><circle cx="6" cy="6" r="5.6" fill="#5f7db2"/><path d="M-1 3.5 L3.5 -1 L7.5 3 L3 7.5Z" fill="#fff"/><path d="M9 9 L15 15" stroke="#9ab0d8" stroke-width="1" /></svg><svg style="left:2.5px;top:97.9px" width="20" height="19" viewBox="0 0 20 19"><path d="M1 13 L10 9 L19 13 L10 17Z" fill="#e8e8f0" stroke="#6a6a80" stroke-width=".9"/><path d="M1 10 L10 6 L19 10 L10 14Z" fill="#f4f4f8" stroke="#6a6a80" stroke-width=".9"/><path d="M1 7 L10 3 L19 7 L10 11Z" fill="#fafafa" stroke="#6a6a80" stroke-width=".9"/><path d="M8 0 H12 V5 H14.5 L10 10 L5.5 5 H8Z" fill="#2f7ee0"/></svg><svg style="left:32px;top:98px" width="20" height="18" viewBox="0 0 20 18"><rect x="0.5" y="8.5" width="19" height="9" fill="#f0f2f8" stroke="#5a6a8a"/><path d="M2 11h16M2 13h16M2 15h16" stroke="#8a9ab8" stroke-dasharray="1.5 1" stroke-width="1"/><path d="M1 1h18" stroke="#6a7a9a" stroke-dasharray="1.5 1.2"/><path d="M1 8.5V2M19 8.5V2" stroke="#5a6a8a"/><path d="M8.5 2 H11.5 V6 H14 L10 10.5 L6 6 H8.5Z" fill="#2f7ee0"/></svg><svg style="left:62.4px;top:98px" width="20" height="18" viewBox="0 0 20 18"><rect x="0.5" y="8.5" width="19" height="9" fill="#f0f2f8" stroke="#5a6a8a"/><path d="M2 11h16M2 13h16M2 15h16" stroke="#8a9ab8" stroke-dasharray="1.5 1" stroke-width="1"/><path d="M1 1h18" stroke="#6a7a9a" stroke-dasharray="1.5 1.2"/><path d="M1 8.5V2M19 8.5V2" stroke="#5a6a8a"/><path d="M4 2 H6.5 V6 H9 L5.3 10 L1.5 6 H4Z M13.5 2 H16 V6 H18.5 L14.8 10 L11 6 H13.5Z" fill="#2f7ee0"/></svg><svg style="left:93.6px;top:97.9px" width="20" height="19" viewBox="0 0 20 19"><path d="M1 13 L10 9 L19 13 L10 17Z" fill="#4caa3a" stroke="#2a6a2a" stroke-width=".9"/><path d="M1 10 L10 6 L19 10 L10 14Z" fill="#9ad070" stroke="#3a7a2a" stroke-width=".9"/><path d="M1 7 L10 3 L19 7 L10 11Z" fill="#d8d8d8" stroke="#6a6a6a" stroke-width=".9"/><path d="M8 0 H12 V5 H14.5 L10 10 L5.5 5 H8Z" fill="#2f7ee0"/></svg><svg style="left:119.9px;top:106.9px" width="8" height="4" viewBox="0 0 8 4"><path d="M0 0h7l-3.5 4z" fill="#111"/></svg><svg style="left:137px;top:98px" width="22" height="19" viewBox="0 0 22 19"><rect x="0.5" y="8.5" width="19" height="9" fill="#f6f6f6" stroke="#c8c8c8"/><path d="M2 11h16M2 13h16M2 15h16" stroke="#d4d4d4" stroke-dasharray="1.5 1"/><path d="M1 1h18M1 4h18" stroke="#d0d0d0" stroke-dasharray="1.5 1.2"/><path d="M14 12 L21 19 M21 12 L14 19" stroke="#b8b8b8" stroke-width="2.2"/></svg><div class="a" style="left:165.8px;top:95.4px;width:1px;height:24.599999999999994px;background:#a8a8a8"></div><svg style="left:178.2px;top:97.9px" width="21" height="20" viewBox="0 0 21 20"><text x="0.5" y="7" font-family="Liberation Mono" font-weight="bold" font-size="8.5" fill="#222" textLength="20" lengthAdjust="spacingAndGlyphs">LOAD</text><path d="M3 9 H6 V13 H8.5 L4.5 19 L0.5 13 H3Z M14 9 H17 V13 H19.5 L15.5 19 L11.5 13 H14Z" fill="#2a72d8"/><circle cx="10" cy="13" r="3.6" fill="#e8e820"/></svg><div class="a" style="left:205.3px;top:95.4px;width:1px;height:24.599999999999994px;background:#a8a8a8"></div><div class="t" style="left:219.70px;top:103.75px;font-size:14.00px;color:#1e1e1e;transform:scaleX(0.8990);transform-origin:0 0;">STM32L476G_EVAL</div><div class="a" style="left:379px;top:99.5px;width:17.2px;height:20.5px;background:#e3e3e3;border:1px solid #b8b8b8"></div><svg style="left:382.5px;top:107px" width="10" height="6" viewBox="0 0 10 6"><path d="M1 1 L5 5 L9 1" stroke="#606060" stroke-width="1.3" fill="none"/></svg><svg style="left:404.4px;top:97.5px" width="22" height="20" viewBox="0 0 22 20"><path d="M9 6 L21 18" stroke="#1a1a2a" stroke-width="2.6"/><path d="M8 5 L11 8" stroke="#e0c020" stroke-width="2.6"/><circle cx="15" cy="2" r="1" fill="#e04060"/><circle cx="19" cy="5" r="1" fill="#e04060"/><circle cx="12" cy="1" r=".9" fill="#e04060"/><path d="M6 9 V13 M2 17 L6 13 L10 17" stroke="#4a7ad0" stroke-width="1.2" fill="none"/><rect x="4" y="7.5" width="4" height="3" fill="#4a7ad0"/><rect x="0" y="15.5" width="4" height="4" fill="#5a8ae0"/><rect x="8" y="15.5" width="4" height="4" fill="#5a8ae0"/></svg><div class="a" style="left:433.4px;top:95.4px;width:1px;height:24.599999999999994px;background:#a8a8a8"></div><svg style="left:446.3px;top:97.9px" width="18" height="19" viewBox="0 0 18 19"><rect x="5" y="0.5" width="8" height="8" rx="1" fill="#e02020" stroke="#3a3a8a"/><rect x="0.5" y="8.5" width="17" height="10" fill="#4a5aa0"/><rect x="2" y="10" width="6" height="7" fill="#20c020"/><rect x="10" y="10" width="6" height="7" fill="#f0f0f0"/></svg><svg style="left:475px;top:98px" width="19" height="19" viewBox="0 0 19 19"><rect x="0.5" y="0.5" width="11" height="7" fill="#f4f4f4" stroke="#b0b0b0"/><rect x="4.5" y="5.5" width="11" height="7" fill="#f4f4f4" stroke="#b0b0b0"/><rect x="7.5" y="10.5" width="11" height="7" fill="#f4f4f4" stroke="#b0b0b0"/></svg><svg style="left:505.4px;top:98px" width="18" height="18" viewBox="0 0 18 18"><path d="M9 0 L18 9 L9 18 L0 9Z" fill="#22d022" stroke="#108010" stroke-width=".8"/><circle cx="9" cy="5" r="1.3" fill="#111"/><circle cx="9" cy="13" r="1.3" fill="#111"/><circle cx="5" cy="9" r="1.3" fill="#111"/><circle cx="13" cy="9" r="1.3" fill="#111"/></svg><svg style="left:535px;top:98px" width="20" height="19" viewBox="0 0 20 19"><path d="M5.5 1 L10.5 6 L5.5 11 L0.5 6Z" fill="#22c022"/><path d="M14.5 1.5 L19.5 6.5 L14.5 11.5 L9.5 6.5Z" fill="#30c8e0"/><path d="M0.5 8 H19.5 L12 14 V18.5 H8 V14Z" fill="#e6f4f8" stroke="#8ab0c0" stroke-width=".8"/></svg><svg style="left:564.6px;top:97.5px" width="21" height="19" viewBox="0 0 21 19"><path d="M7 0.5 L12 5.5 L7 10.5 L2 5.5Z" fill="#e8e030" stroke="#555" stroke-width=".6"/><path d="M15 2 L20.5 7.5 L15 13 L9.5 7.5Z" fill="#30d0e8" stroke="#226" stroke-width=".6"/><path d="M9 5 L15 11 L9 17 L3 11Z" fill="#22c022" stroke="#125012" stroke-width=".6"/><path d="M0.5 9 V18.5 H20.5 V9" fill="none" stroke="#111" stroke-width="1.6"/></svg><div class="a" style="left:0px;top:125.5px;width:274px;height:22.5px;background:linear-gradient(#98b2d0,#b8cde6)"></div><div class="t" style="left:-12.50px;top:131.14px;font-size:14.60px;color:#1e1e1e;">Project</div><svg style="left:233px;top:133px" width="10" height="11" viewBox="0 0 10 11"><path d="M2 0h6v1H7v5h2v1H5v4H4V7H0V6h2V1H1V0z" fill="#111"/></svg><div class="a" style="left:254px;top:131px;width:15px;height:15px;background:#d04646"></div><svg style="left:257px;top:134px" width="9" height="9" viewBox="0 0 9 9"><path d="M1.5 1.5L7.5 7.5M7.5 1.5L1.5 7.5" stroke="#fff" stroke-width="2"/></svg><div class="a" style="left:0px;top:148px;width:274px;height:3px;background:#fff"></div><div class="a" style="left:0px;top:151px;width:274px;height:1px;background:#c8c8c8"></div><div class="a" style="left:273px;top:126px;width:1px;height:738px;background:#b8b8b8"></div><div class="a" style="left:274px;top:126px;width:5px;height:738px;background:#fff"></div><div class="a" style="left:279px;top:126px;width:1px;height:29px;background:#b4b4b4"></div><div class="a" style="left:262px;top:152px;width:11px;height:712px;background:linear-gradient(90deg,rgba(236,236,236,0),#ececec)"></div><div class="a" style="left:280px;top:126px;width:1060px;height:32px;background:#f0f0f0"></div><div class="a" style="left:280px;top:126px;width:1060px;height:1px;background:#d0d0d0"></div><svg style="left:0;top:0" width="1340" height="160" viewBox="0 0 1340 160"><path d="M286 155 L312 129.5 L394 129.5 Q398 129.5 398 133.5 L398 155 Z" fill="#c6d5ef" stroke="rgba(90,90,90,.35)" stroke-width="1"/><path d="M507.7 155 L507.7 135.5 L513.7 129.5 L648 129.5 L651 132.5 L651 155 Z" fill="#c3cfa3" stroke="rgba(90,90,90,.35)" stroke-width="1"/><path d="M652 155 L652 135.5 L658 129.5 L768 129.5 L771 132.5 L771 155 Z" fill="#f1a3a3" stroke="rgba(90,90,90,.35)" stroke-width="1"/><path d="M772.3 155 L772.3 135.5 L778.3 129.5 L880 129.5 L883 132.5 L883 155 Z" fill="#c1b2e3" stroke="rgba(90,90,90,.35)" stroke-width="1"/><path d="M884.2 155 L884.2 135.5 L890.2 129.5 L979.7 129.5 L982.7 132.5 L982.7 155 Z" fill="#aac9ba" stroke="rgba(90,90,90,.35)" stroke-width="1"/><path d="M983.9 155 L983.9 135.5 L989.9 129.5 L1099.7 129.5 L1102.7 132.5 L1102.7 155 Z" fill="#f6b787" stroke="rgba(90,90,90,.35)" stroke-width="1"/><path d="M1103.8 155 L1103.8 135.5 L1109.8 129.5 L1293.3 129.5 L1296.3 132.5 L1296.3 155 Z" fill="#d9b2cd" stroke="rgba(90,90,90,.35)" stroke-width="1"/><path d="M1297.4 155 L1297.4 135.5 L1303.4 129.5 L1397 129.5 L1400 132.5 L1400 155 Z" fill="#aac2d9" stroke="rgba(90,90,90,.35)" stroke-width="1"/><path d="M380 155 L404.7 129.5 L502.6 129.5 Q506.6 129.5 506.6 133.5 L506.6 155 Z" fill="#fcd37d" stroke="rgba(90,90,90,.35)" stroke-width="1"/></svg><svg style="left:315px;top:132.3px" width="15" height="19" viewBox="0 0 15 19"><path d="M0.5 18.5 V0.5 H10 L14.5 5 V18.5 Z" fill="url(#pgg)" stroke="none"/><path d="M0.8 18 V0.8 H10" fill="none" stroke="#aab4c8" stroke-width="1.2"/><path d="M10 0.8 L14.2 5 V18.2 H0.8" fill="none" stroke="#3c4a6c" stroke-width="1.5"/><path d="M10 0.8 V5 H14.2 Z" fill="#5a6888"/><rect x="3" y="3" width="7" height="12" fill="url(#chk)"/></svg><div class="t" style="left:343.30px;top:136.11px;font-size:14.40px;color:#222;transform:scaleX(0.9667);transform-origin:0 0;">main.c</div><svg style="left:519px;top:132.3px" width="15" height="19" viewBox="0 0 15 19"><path d="M0.5 18.5 V0.5 H10 L14.5 5 V18.5 Z" fill="url(#pgg)" stroke="none"/><path d="M0.8 18 V0.8 H10" fill="none" stroke="#aab4c8" stroke-width="1.2"/><path d="M10 0.8 L14.2 5 V18.2 H0.8" fill="none" stroke="#3c4a6c" stroke-width="1.5"/><path d="M10 0.8 V5 H14.2 Z" fill="#5a6888"/></svg><div class="t" style="left:549.00px;top:136.11px;font-size:14.40px;color:#222;transform:scaleX(0.9413);transform-origin:0 0;">stm32l476xx.h</div><svg style="left:664.3px;top:132.3px" width="15" height="19" viewBox="0 0 15 19"><path d="M0.5 18.5 V0.5 H10 L14.5 5 V18.5 Z" fill="url(#pgg)" stroke="none"/><path d="M0.8 18 V0.8 H10" fill="none" stroke="#aab4c8" stroke-width="1.2"/><path d="M10 0.8 L14.2 5 V18.2 H0.8" fill="none" stroke="#3c4a6c" stroke-width="1.5"/><path d="M10 0.8 V5 H14.2 Z" fill="#5a6888"/><rect x="3" y="3" width="7" height="12" fill="url(#chk)"/></svg><div class="t" style="left:692.80px;top:136.11px;font-size:14.40px;color:#222;transform:scaleX(0.9636);transform-origin:0 0;">ymodem.c</div><svg style="left:784.6px;top:132.3px" width="15" height="19" viewBox="0 0 15 19"><path d="M0.5 18.5 V0.5 H10 L14.5 5 V18.5 Z" fill="url(#pgg)" stroke="none"/><path d="M0.8 18 V0.8 H10" fill="none" stroke="#aab4c8" stroke-width="1.2"/><path d="M10 0.8 L14.2 5 V18.2 H0.8" fill="none" stroke="#3c4a6c" stroke-width="1.5"/><path d="M10 0.8 V5 H14.2 Z" fill="#5a6888"/></svg><div class="t" style="left:811.50px;top:136.11px;font-size:14.40px;color:#222;transform:scaleX(1.0063);transform-origin:0 0;">flash_if.h</div><svg style="left:895.4px;top:132.3px" width="15" height="19" viewBox="0 0 15 19"><path d="M0.5 18.5 V0.5 H10 L14.5 5 V18.5 Z" fill="url(#pgg)" stroke="none"/><path d="M0.8 18 V0.8 H10" fill="none" stroke="#aab4c8" stroke-width="1.2"/><path d="M10 0.8 L14.2 5 V18.2 H0.8" fill="none" stroke="#3c4a6c" stroke-width="1.5"/><path d="M10 0.8 V5 H14.2 Z" fill="#5a6888"/><rect x="3" y="3" width="7" height="12" fill="url(#chk)"/></svg><div class="t" style="left:923.40px;top:136.11px;font-size:14.40px;color:#222;transform:scaleX(0.9741);transform-origin:0 0;">menu.c</div><svg style="left:995px;top:132.3px" width="15" height="19" viewBox="0 0 15 19"><path d="M0.5 18.5 V0.5 H10 L14.5 5 V18.5 Z" fill="url(#pgg)" stroke="none"/><path d="M0.8 18 V0.8 H10" fill="none" stroke="#aab4c8" stroke-width="1.2"/><path d="M10 0.8 L14.2 5 V18.2 H0.8" fill="none" stroke="#3c4a6c" stroke-width="1.5"/><path d="M10 0.8 V5 H14.2 Z" fill="#5a6888"/><rect x="3" y="3" width="7" height="12" fill="url(#chk)"/></svg><div class="t" style="left:1024.00px;top:136.11px;font-size:14.40px;color:#222;transform:scaleX(0.9787);transform-origin:0 0;">common.c</div><svg style="left:1115px;top:132.3px" width="15" height="19" viewBox="0 0 15 19"><path d="M0.5 18.5 V0.5 H10 L14.5 5 V18.5 Z" fill="url(#pgg)" stroke="none"/><path d="M0.8 18 V0.8 H10" fill="none" stroke="#aab4c8" stroke-width="1.2"/><path d="M10 0.8 L14.2 5 V18.2 H0.8" fill="none" stroke="#3c4a6c" stroke-width="1.5"/><path d="M10 0.8 V5 H14.2 Z" fill="#5a6888"/></svg><div class="t" style="left:1144.00px;top:136.11px;font-size:14.40px;color:#222;transform:scaleX(0.9587);transform-origin:0 0;">stm32l4xx_hal_flash.h</div><svg style="left:1308.6px;top:132.3px" width="15" height="19" viewBox="0 0 15 19"><path d="M0.5 18.5 V0.5 H10 L14.5 5 V18.5 Z" fill="url(#pgg)" stroke="none"/><path d="M0.8 18 V0.8 H10" fill="none" stroke="#aab4c8" stroke-width="1.2"/><path d="M10 0.8 L14.2 5 V18.2 H0.8" fill="none" stroke="#3c4a6c" stroke-width="1.5"/><path d="M10 0.8 V5 H14.2 Z" fill="#5a6888"/></svg><div class="t" style="left:1337.70px;top:136.11px;font-size:14.40px;color:#222;">stm32l4xx_hal.h</div><svg style="left:410.3px;top:132.3px" width="15" height="19" viewBox="0 0 15 19"><path d="M0.5 18.5 V0.5 H10 L14.5 5 V18.5 Z" fill="url(#pgg)" stroke="none"/><path d="M0.8 18 V0.8 H10" fill="none" stroke="#aab4c8" stroke-width="1.2"/><path d="M10 0.8 L14.2 5 V18.2 H0.8" fill="none" stroke="#3c4a6c" stroke-width="1.5"/><path d="M10 0.8 V5 H14.2 Z" fill="#5a6888"/><rect x="3" y="3" width="7" height="12" fill="url(#chk)"/></svg><div class="t" style="left:438.30px;top:135.48px;font-size:14.20px;color:#111;font-weight:bold;transform:scaleX(0.8935);transform-origin:0 0;">flash_if.c</div><div class="a" style="left:434px;top:151px;width:65px;height:2px;background:#111"></div><div class="a" style="left:279px;top:155px;width:1061px;height:3px;background:#f7d98a"></div><div class="a" style="left:279px;top:155px;width:4px;height:673px;background:#f7d98a"></div><div class="a" style="left:279px;top:824px;width:1061px;height:4px;background:#f7d98a"></div><div class="a" style="left:283px;top:158px;width:2px;height:666px;background:linear-gradient(90deg,#8a877c,#4e4e4e)"></div><div class="a" style="left:372px;top:158px;width:1px;height:643px;background:#929292"></div><div class="a" style="left:365.5px;top:303.5px;width:13px;height:13px;background:#f2f2f2;border:1px solid #8c8c8c"></div><div class="a" style="left:368.5px;top:309.5px;width:7px;height:1.3px;background:#7a7a7a"></div><div class="a" style="left:365.5px;top:423.5px;width:13px;height:13px;background:#f2f2f2;border:1px solid #8c8c8c"></div><div class="a" style="left:368.5px;top:429.5px;width:7px;height:1.3px;background:#7a7a7a"></div><div class="a" style="left:365.5px;top:743.5px;width:13px;height:13px;background:#f2f2f2;border:1px solid #8c8c8c"></div><div class="a" style="left:368.5px;top:749.5px;width:7px;height:1.3px;background:#7a7a7a"></div><div class="a" style="left:372px;top:389.5px;width:6px;height:1px;background:#929292"></div><div class="a" style="left:372px;top:509.5px;width:6px;height:1px;background:#929292"></div><div class="a" style="left:285px;top:801px;width:1055px;height:1px;background:#fafafa"></div><div class="a" style="left:285px;top:802px;width:1055px;height:22px;background:#f0f0f0"></div><svg style="left:291px;top:807px" width="9" height="11" viewBox="0 0 9 11"><path d="M7 1L2 5.3L7 9.6" stroke="#5a5a5a" stroke-width="2.4" fill="none"/></svg><div class="a" style="left:307px;top:803px;width:924px;height:19px;background:#cdcdcd"></div><div class="a" style="left:280px;top:828px;width:1060px;height:36px;background:#fff"></div><div class="a" style="left:279px;top:834px;width:1061px;height:23px;background:linear-gradient(#b9cde0,#d6e3f0)"></div><div class="t" style="left:285.00px;top:839.75px;font-size:14.00px;color:#1e1e1e;transform:scaleX(1.0643);transform-origin:0 0;">Build Output</div><div class="a" style="left:279px;top:860px;width:1061px;height:1px;background:#c4c4c4"></div><div class="a" style="left:281px;top:861px;width:1059px;height:3px;background:#f0f0f0"></div><div class="a" style="left:306px;top:258px;width:722px;height:26px;border:4px solid #ff5468;border-radius:7px"></div><div class="a" style="left:300px;top:578px;width:710px;height:26px;border:4px solid #ff5468;border-radius:7px"></div>
</body></html>
